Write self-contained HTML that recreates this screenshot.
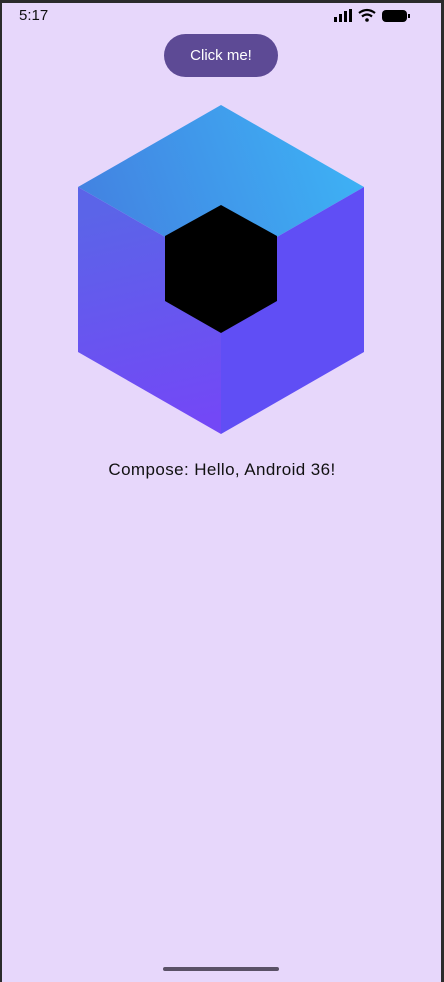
<!DOCTYPE html>
<html><head><style>
html,body{margin:0;padding:0;}
body{width:444px;height:982px;background:#2b2b2b;position:relative;overflow:hidden;font-family:"Liberation Sans",sans-serif;}
#s{position:absolute;left:2px;top:3px;width:439px;height:979px;background:#e7d7fb;}
.t{position:absolute;}
</style></head><body>
<div id="s"></div>
<div class="t" style="left:19px;top:7px;font-size:15px;color:#111;">5:17</div>
<svg class="t" style="left:330px;top:8px" width="84" height="18">
<rect x="4" y="9" width="3" height="5" fill="#000"/>
<rect x="9" y="6" width="3" height="8" fill="#000"/>
<rect x="14" y="3" width="3" height="11" fill="#000"/>
<rect x="19" y="1" width="3" height="13" fill="#000"/>
<path d="M29 5 Q37 -1 45 5" stroke="#000" stroke-width="2.2" fill="none"/>
<path d="M32 8.5 Q37 4.5 42 8.5" stroke="#000" stroke-width="2.2" fill="none"/>
<circle cx="37" cy="12" r="1.8" fill="#000"/>
<rect x="52" y="2" width="25" height="12" rx="4" fill="#000"/>
<rect x="78" y="6" width="2" height="4" fill="#000"/>
</svg>
<div class="t" style="left:164px;top:34px;width:114px;height:43px;border-radius:22px;background:#5d4a95;color:#fff;font-size:15px;line-height:43px;text-align:center;">Click me!</div>
<svg class="t" style="left:0;top:0" width="444" height="450">
<defs>
<linearGradient id="top" x1="78" y1="230" x2="364" y2="130" gradientUnits="userSpaceOnUse"><stop offset="0" stop-color="#4380e0"/><stop offset="1" stop-color="#3db4f6"/></linearGradient>
<linearGradient id="lf" x1="150" y1="200" x2="200" y2="420" gradientUnits="userSpaceOnUse"><stop offset="0" stop-color="#5b64e8"/><stop offset="1" stop-color="#7348f6"/></linearGradient>
</defs>
<polygon points="221,105 364,187 221,269 78,187" fill="url(#top)"/>
<polygon points="78,187 221,269 221,434 78,352" fill="url(#lf)"/>
<polygon points="364,187 364,352 221,434 221,269" fill="#604ef5"/>
<polygon points="221,205 277,236 277,301 221,333 165,301 165,236" fill="#000"/>
</svg>
<div class="t" style="left:0;width:444px;top:460px;text-align:center;font-size:17px;letter-spacing:0.4px;color:#111;">Compose: Hello, Android 36!</div>
<div class="t" style="left:163px;top:967px;width:116px;height:4px;border-radius:2px;background:#5a5166;"></div>
</body></html>
